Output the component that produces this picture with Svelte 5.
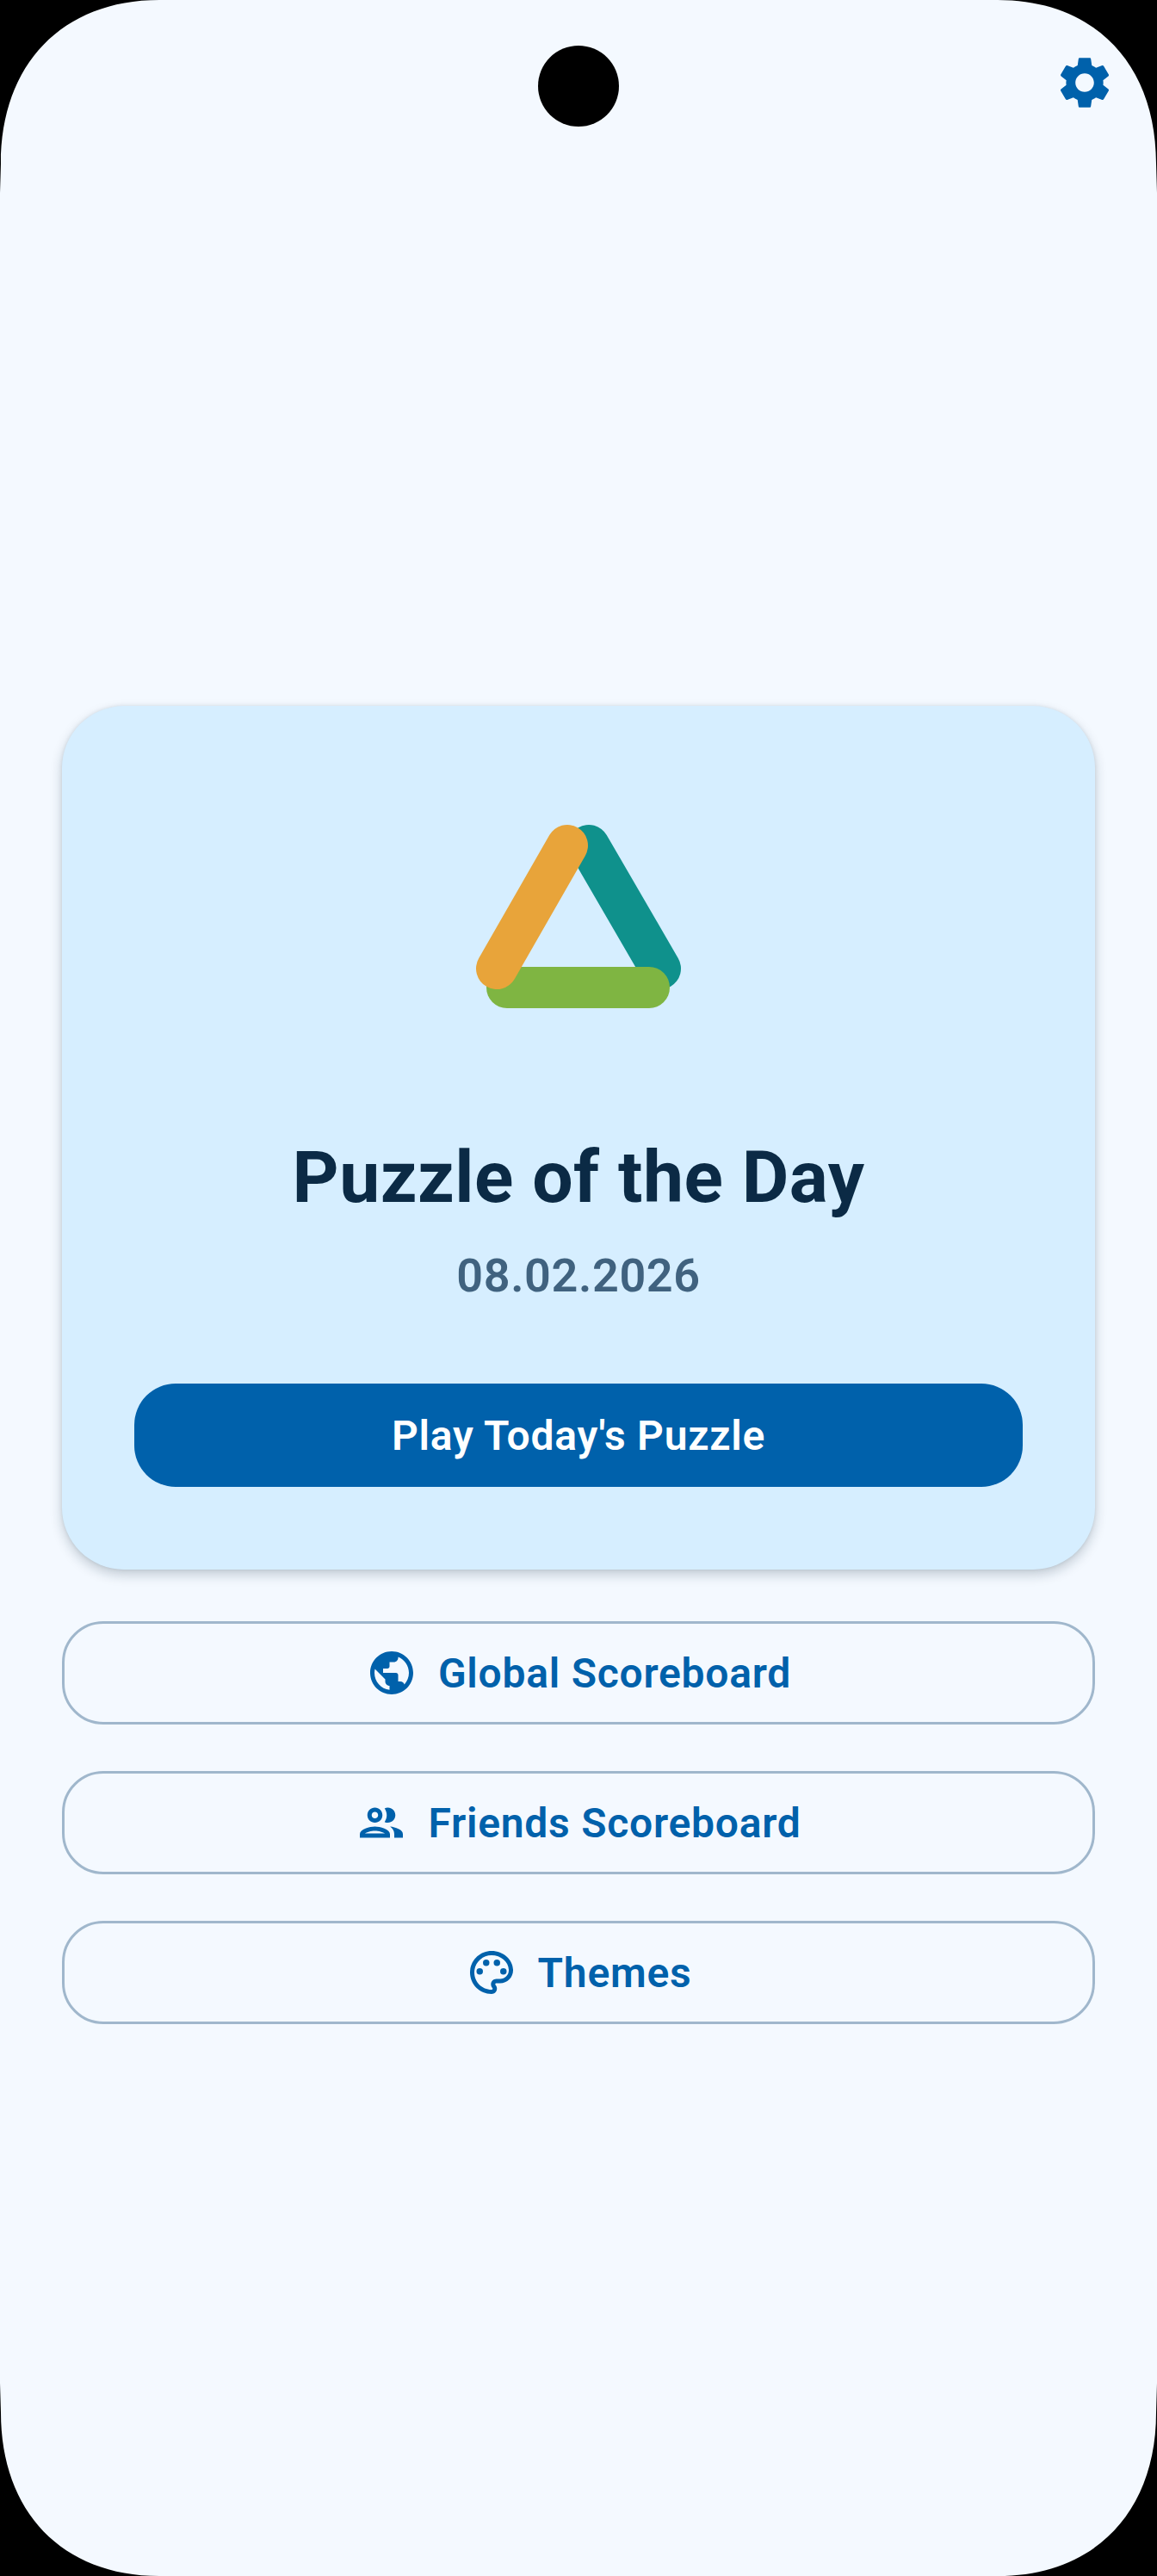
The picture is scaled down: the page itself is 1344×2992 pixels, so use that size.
<script>
  const actions = [
    { label: 'Global Scoreboard', paths: ['M12 2C6.48 2 2 6.48 2 12s4.48 10 10 10 10-4.48 10-10S17.52 2 12 2zm-1 17.93c-3.95-.49-7-3.85-7-7.93 0-.62.08-1.21.21-1.79L9 15v1c0 1.1.9 2 2 2v1.93zm6.9-2.54c-.26-.81-1-1.39-1.9-1.39h-1v-3c0-.55-.45-1-1-1H8v-2h2c.55 0 1-.45 1-1V7h2c1.1 0 2-.9 2-2v-.41c2.93 1.19 5 4.06 5 7.41 0 2.08-.8 3.97-2.1 5.39z'], dots: [] },
    { label: 'Friends Scoreboard', paths: ['M9 13.75c-2.34 0-7 1.17-7 3.5V19h14v-1.75c0-2.33-4.66-3.5-7-3.5zM4.34 17c.84-.58 2.87-1.25 4.66-1.25s3.82.67 4.66 1.25H4.34zM9 12c1.93 0 3.5-1.57 3.5-3.5S10.93 5 9 5 5.5 6.57 5.5 8.5 7.07 12 9 12zm0-5c.83 0 1.5.67 1.5 1.5S9.83 10 9 10s-1.5-.67-1.5-1.5S8.17 7 9 7zm7.04 6.81c1.16.84 1.96 1.96 1.96 3.44V19h4v-1.75c0-2.02-3.5-3.17-5.96-3.44zM15 12c1.93 0 3.5-1.57 3.5-3.5S16.93 5 15 5c-.54 0-1.04.13-1.5.35.63.89 1 1.98 1 3.15s-.37 2.26-1 3.15c.46.22.96.35 1.5.35z'], dots: [] },
    { label: 'Themes', paths: ['M12 22C6.49 22 2 17.51 2 12S6.49 2 12 2s10 4.04 10 9c0 3.31-2.69 6-6 6h-1.77c-.28 0-.5.22-.5.5 0 .12.05.23.13.33.41.47.64 1.06.64 1.67 0 1.38-1.12 2.5-2.5 2.5zm0-18c-4.41 0-8 3.59-8 8s3.59 8 8 8c.28 0 .5-.22.5-.5 0-.16-.08-.28-.14-.35-.41-.46-.63-1.05-.63-1.65 0-1.38 1.12-2.5 2.5-2.5H16c2.21 0 4-1.79 4-4 0-3.86-3.59-7-8-7z'], dots: [[6.5, 11.5], [9.5, 7.5], [14.5, 7.5], [17.5, 11.5]] }
  ];
</script>

<main class="screen">
  <button class="gear" aria-label="Settings">
    <svg viewBox="0 0 24 24" width="72" height="72"><path d="M19.14 12.94c.04-.3.06-.61.06-.94 0-.32-.02-.64-.07-.94l2.03-1.58c.18-.14.23-.41.12-.61l-1.92-3.32c-.12-.22-.37-.29-.59-.22l-2.39.96c-.5-.38-1.03-.7-1.62-.94l-.36-2.54c-.04-.24-.24-.41-.48-.41h-3.84c-.24 0-.43.17-.47.41l-.36 2.54c-.59.24-1.13.57-1.62.94l-2.39-.96c-.22-.08-.47 0-.59.22L2.74 8.87c-.12.21-.08.47.12.61l2.03 1.58c-.05.3-.09.63-.09.94s.02.64.07.94l-2.03 1.58c-.18.14-.23.41-.12.61l1.92 3.32c.12.22.37.29.59.22l2.39-.96c.5.38 1.03.7 1.62.94l.36 2.54c.05.24.24.41.48.41h3.84c.24 0 .44-.17.47-.41l.36-2.54c.59-.24 1.13-.56 1.62-.94l2.39.96c.22.08.47 0 .59-.22l1.92-3.32c.12-.22.07-.47-.12-.61l-2.01-1.58zM12 15.6c-1.98 0-3.6-1.62-3.6-3.6s1.62-3.6 3.6-3.6 3.6 1.62 3.6 3.6-1.62 3.6-3.6 3.6z" /></svg>
  </button>

  <section class="card">
    <svg class="logo" viewBox="0 0 240 240" width="240" height="240" aria-hidden="true">
      <g fill="none" stroke-width="48" stroke-linecap="round">
        <line x1="132" y1="37" x2="215" y2="180" stroke="#0f918c" />
        <line x1="37" y1="202" x2="202" y2="202" stroke="#7fb542" />
        <line x1="107" y1="37" x2="25" y2="180" stroke="#e8a43a" />
      </g>
    </svg>
    <h1>Puzzle of the Day</h1>
    <p class="date">08.02.2026</p>
    <button class="play">Play Today's Puzzle</button>
  </section>

  <nav class="actions">
    {#each actions as a}
      <button class="outline">
        <svg viewBox="0 0 24 24" width="60" height="60" aria-hidden="true">
          {#each a.paths as d}<path {d} />{/each}
          {#each a.dots as [cx, cy]}<circle {cx} {cy} r="1.5" />{/each}
        </svg>
        <span>{a.label}</span>
      </button>
    {/each}
  </nav>

  <div class="camera"></div>
  <svg class="corners" viewBox="0 0 1344 2992" width="1344" height="2992" aria-hidden="true">
    <path d="M0 0H185C72 0 1 75 1 190L0 224Z" />
    <path d="M1344 0H1159C1272 0 1343 75 1343 190L1344 224Z" />
    <path d="M0 2992H185C72 2992 1 2917 1 2802L0 2768Z" />
    <path d="M1344 2992H1159C1272 2992 1343 2917 1343 2802L1344 2768Z" />
  </svg>
</main>

<style>
  :global(body) {
    margin: 0;
    background: #000;
  }

  .screen {
    position: relative;
    box-sizing: border-box;
    width: 1344px;
    height: 2992px;
    padding: 820px 72px 0;
    overflow: hidden;
    background: #f4f9ff;
    font-family: Roboto, "Liberation Sans", sans-serif;
  }

  button {
    font-family: inherit;
    cursor: pointer;
  }

  .gear {
    position: absolute;
    top: 60px;
    right: 48px;
    display: flex;
    padding: 0;
    border: 0;
    background: none;
  }

  svg path,
  svg circle {
    fill: #0061ab;
  }

  .card {
    display: flex;
    flex-direction: column;
    align-items: center;
    box-sizing: border-box;
    padding: 125px 84px 96px;
    border-radius: 72px;
    background: #d6eeff;
    box-shadow: 0 6px 14px rgba(15, 40, 60, 0.22), 0 0 4px rgba(15, 40, 60, 0.1);
  }

  .logo {
    display: block;
  }

  h1 {
    margin: 133px 0 0;
    font-size: 84px;
    line-height: 100px;
    font-weight: 700;
    letter-spacing: 0.5px;
    color: #0b2a45;
  }

  .date {
    margin: 31px 0 0;
    font-size: 54px;
    line-height: 66px;
    font-weight: 600;
    letter-spacing: 0.6px;
    color: #40627f;
  }

  .play {
    width: 100%;
    height: 120px;
    margin-top: 92px;
    border: 0;
    border-radius: 48px;
    background: #0061ab;
    color: #fff;
    font-size: 48px;
    font-weight: 600;
    letter-spacing: 0.75px;
  }

  .actions {
    display: flex;
    flex-direction: column;
    gap: 54px;
    margin-top: 60px;
  }

  .outline {
    display: flex;
    align-items: center;
    justify-content: center;
    gap: 24px;
    box-sizing: border-box;
    height: 120px;
    padding: 0;
    border: 3px solid #a0b7cc;
    border-radius: 48px;
    background: transparent;
    color: #0061ab;
    font-size: 48px;
    font-weight: 600;
    letter-spacing: 0.75px;
  }

  .camera {
    position: absolute;
    top: 53px;
    left: 625px;
    width: 94px;
    height: 94px;
    border-radius: 50%;
    background: #000;
  }

  .corners {
    position: absolute;
    inset: 0;
    pointer-events: none;
  }

  .corners path {
    fill: #000;
  }
</style>
